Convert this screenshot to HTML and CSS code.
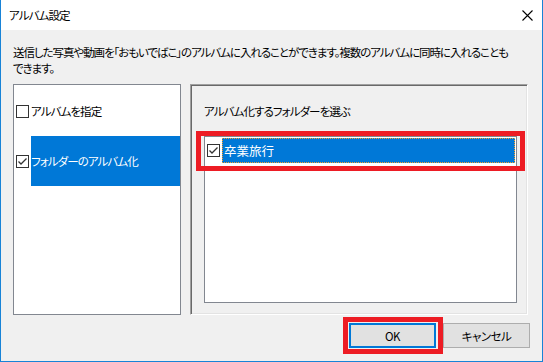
FILE: index.html
```html
<!doctype html>
<html lang="ja">
<head>
	<meta charset="UTF-8">
	<title>アルバム設定</title>
	<link rel="stylesheet" href="styles.css">
</head>
<body>
	<div class="window">
		<div class="titlebar">
			<span class="title">アルバム設定</span>
			<svg class="close" width="11" height="11" viewBox="0 0 11 11"><path d="M0.5 0.5L10.5 10.5M10.5 0.5L0.5 10.5" stroke="#000" stroke-width="1.1" fill="none"/></svg>
		</div>
		<div class="client">
			<p class="desc">送信した写真や動画を「おもいでばこ」のアルバムに入れることができます。複数のアルバムに同時に入れることも<br>できます。</p>
			<div class="panels">
				<ul class="modes">
					<li class="mode"><span class="check"></span><span class="mode-label">アルバムを指定</span></li>
					<li class="mode mode-active">
						<span class="check"><svg width="11" height="11" viewBox="0 0 11 11"><path d="M1.5 5.5L4 8L9.5 2.5" stroke="#333" stroke-width="1.3" fill="none"/></svg></span>
						<span class="mode-label">フォルダーのアルバム化</span>
					</li>
				</ul>
				<div class="group">
					<div class="group-title">アルバム化するフォルダーを選ぶ</div>
					<ul class="folders">
						<li class="folder">
							<span class="check"><svg width="11" height="11" viewBox="0 0 11 11"><path d="M1.5 5.5L4 8L9.5 2.5" stroke="#333" stroke-width="1.3" fill="none"/></svg></span>
							<span class="folder-label">卒業旅行</span>
						</li>
					</ul>
				</div>
			</div>
			<div class="buttons">
				<button class="btn btn-default">OK</button>
				<button class="btn">キャンセル</button>
			</div>
		</div>
		<!-- red marks drawn over the dialog -->
		<div class="mark mark-folder"></div>
		<div class="mark mark-ok"></div>
	</div>
</body>
</html>
```

FILE: styles.css
```css
*{
	margin: 0;
	padding: 0;
	box-sizing: border-box;
}
body{
	font-family: "Noto Sans CJK JP", "Noto Sans", sans-serif;
	font-size: 12px;
	color: #000;
	background: #fff;
}
.window{
	position: relative;
	width: 543px;
	height: 362px;
	border: 1px solid #1883d7;
	border-top: 0;
	display: flex;
	flex-direction: column;
	font-size: 11.5px;
	letter-spacing: -0.9px;
	font-feature-settings: "palt";
}
.titlebar{
	height: 30px;
	background: #fff;
	display: flex;
	align-items: center;
	padding-left: 8px;
}
.close{
	margin-left: auto;
	margin-right: 9px;
}
.client{
	flex: 1;
	background: #f0f0f0;
	padding: 14px 12px 0 12px;
}
.desc{
	line-height: 16px;
	white-space: nowrap;
	letter-spacing: -1.05px;
}
.panels{
	display: flex;
	gap: 9px;
	margin-top: 8px;
	height: 231px;
}
.modes{
	width: 168px;
	border: 1px solid #828790;
	background: #fff;
	list-style: none;
	padding: 1px 0 0 2px;
}
.mode{
	height: 50px;
	display: flex;
	align-items: center;
}
.check{
	width: 13px;
	height: 13px;
	border: 1px solid #333;
	background: #fff;
	flex: none;
	display: flex;
	align-items: center;
	justify-content: center;
}
.mode-label{
	flex: 1;
	height: 100%;
	margin-left: 2px;
	display: flex;
	align-items: center;
}
.mode-active .mode-label{
	background: #0078d7;
	color: #fff;
}
.group{
	width: 338px;
	border: 1px solid;
	border-color: #a0a0a0 #fff #fff #a0a0a0;
	box-shadow: inset 1px 1px 0 #696969, inset -1px -1px 0 #e3e3e3;
	padding: 18px 0 0 13px;
}
.group-title{
	line-height: 16px;
	margin-bottom: 17px;
}
.folders{
	width: 313px;
	height: 167px;
	border: 1px solid #828790;
	background: #fff;
	list-style: none;
	padding: 1px 1px 0 2px;
}
.folder{
	height: 25px;
	display: flex;
	align-items: center;
}
.folder-label{
	flex: 1;
	height: 100%;
	margin-left: 2px;
	padding-left: 1px;
	background: #0078d7;
	color: #fff;
	border: 1px dotted #f5a030;
	display: flex;
	align-items: center;
	font-size: 12.5px;
	letter-spacing: 0;
}
.buttons{
	display: flex;
	justify-content: flex-end;
	gap: 7px;
	margin-top: 8px;
}
.btn{
	width: 87px;
	height: 25px;
	background: #e1e1e1;
	border: 1px solid #adadad;
	font: inherit;
	letter-spacing: -0.5px;
	color: #000;
}
.btn-default{
	border: 2px solid #0078d7;
}
.mark{
	position: absolute;
	border: 5px solid #ed1c24;
}
.mark-folder{
	left: 195px;
	top: 131px;
	width: 329px;
	height: 40px;
}
.mark-ok{
	left: 342px;
	top: 317px;
	width: 100px;
	height: 37px;
}
```
